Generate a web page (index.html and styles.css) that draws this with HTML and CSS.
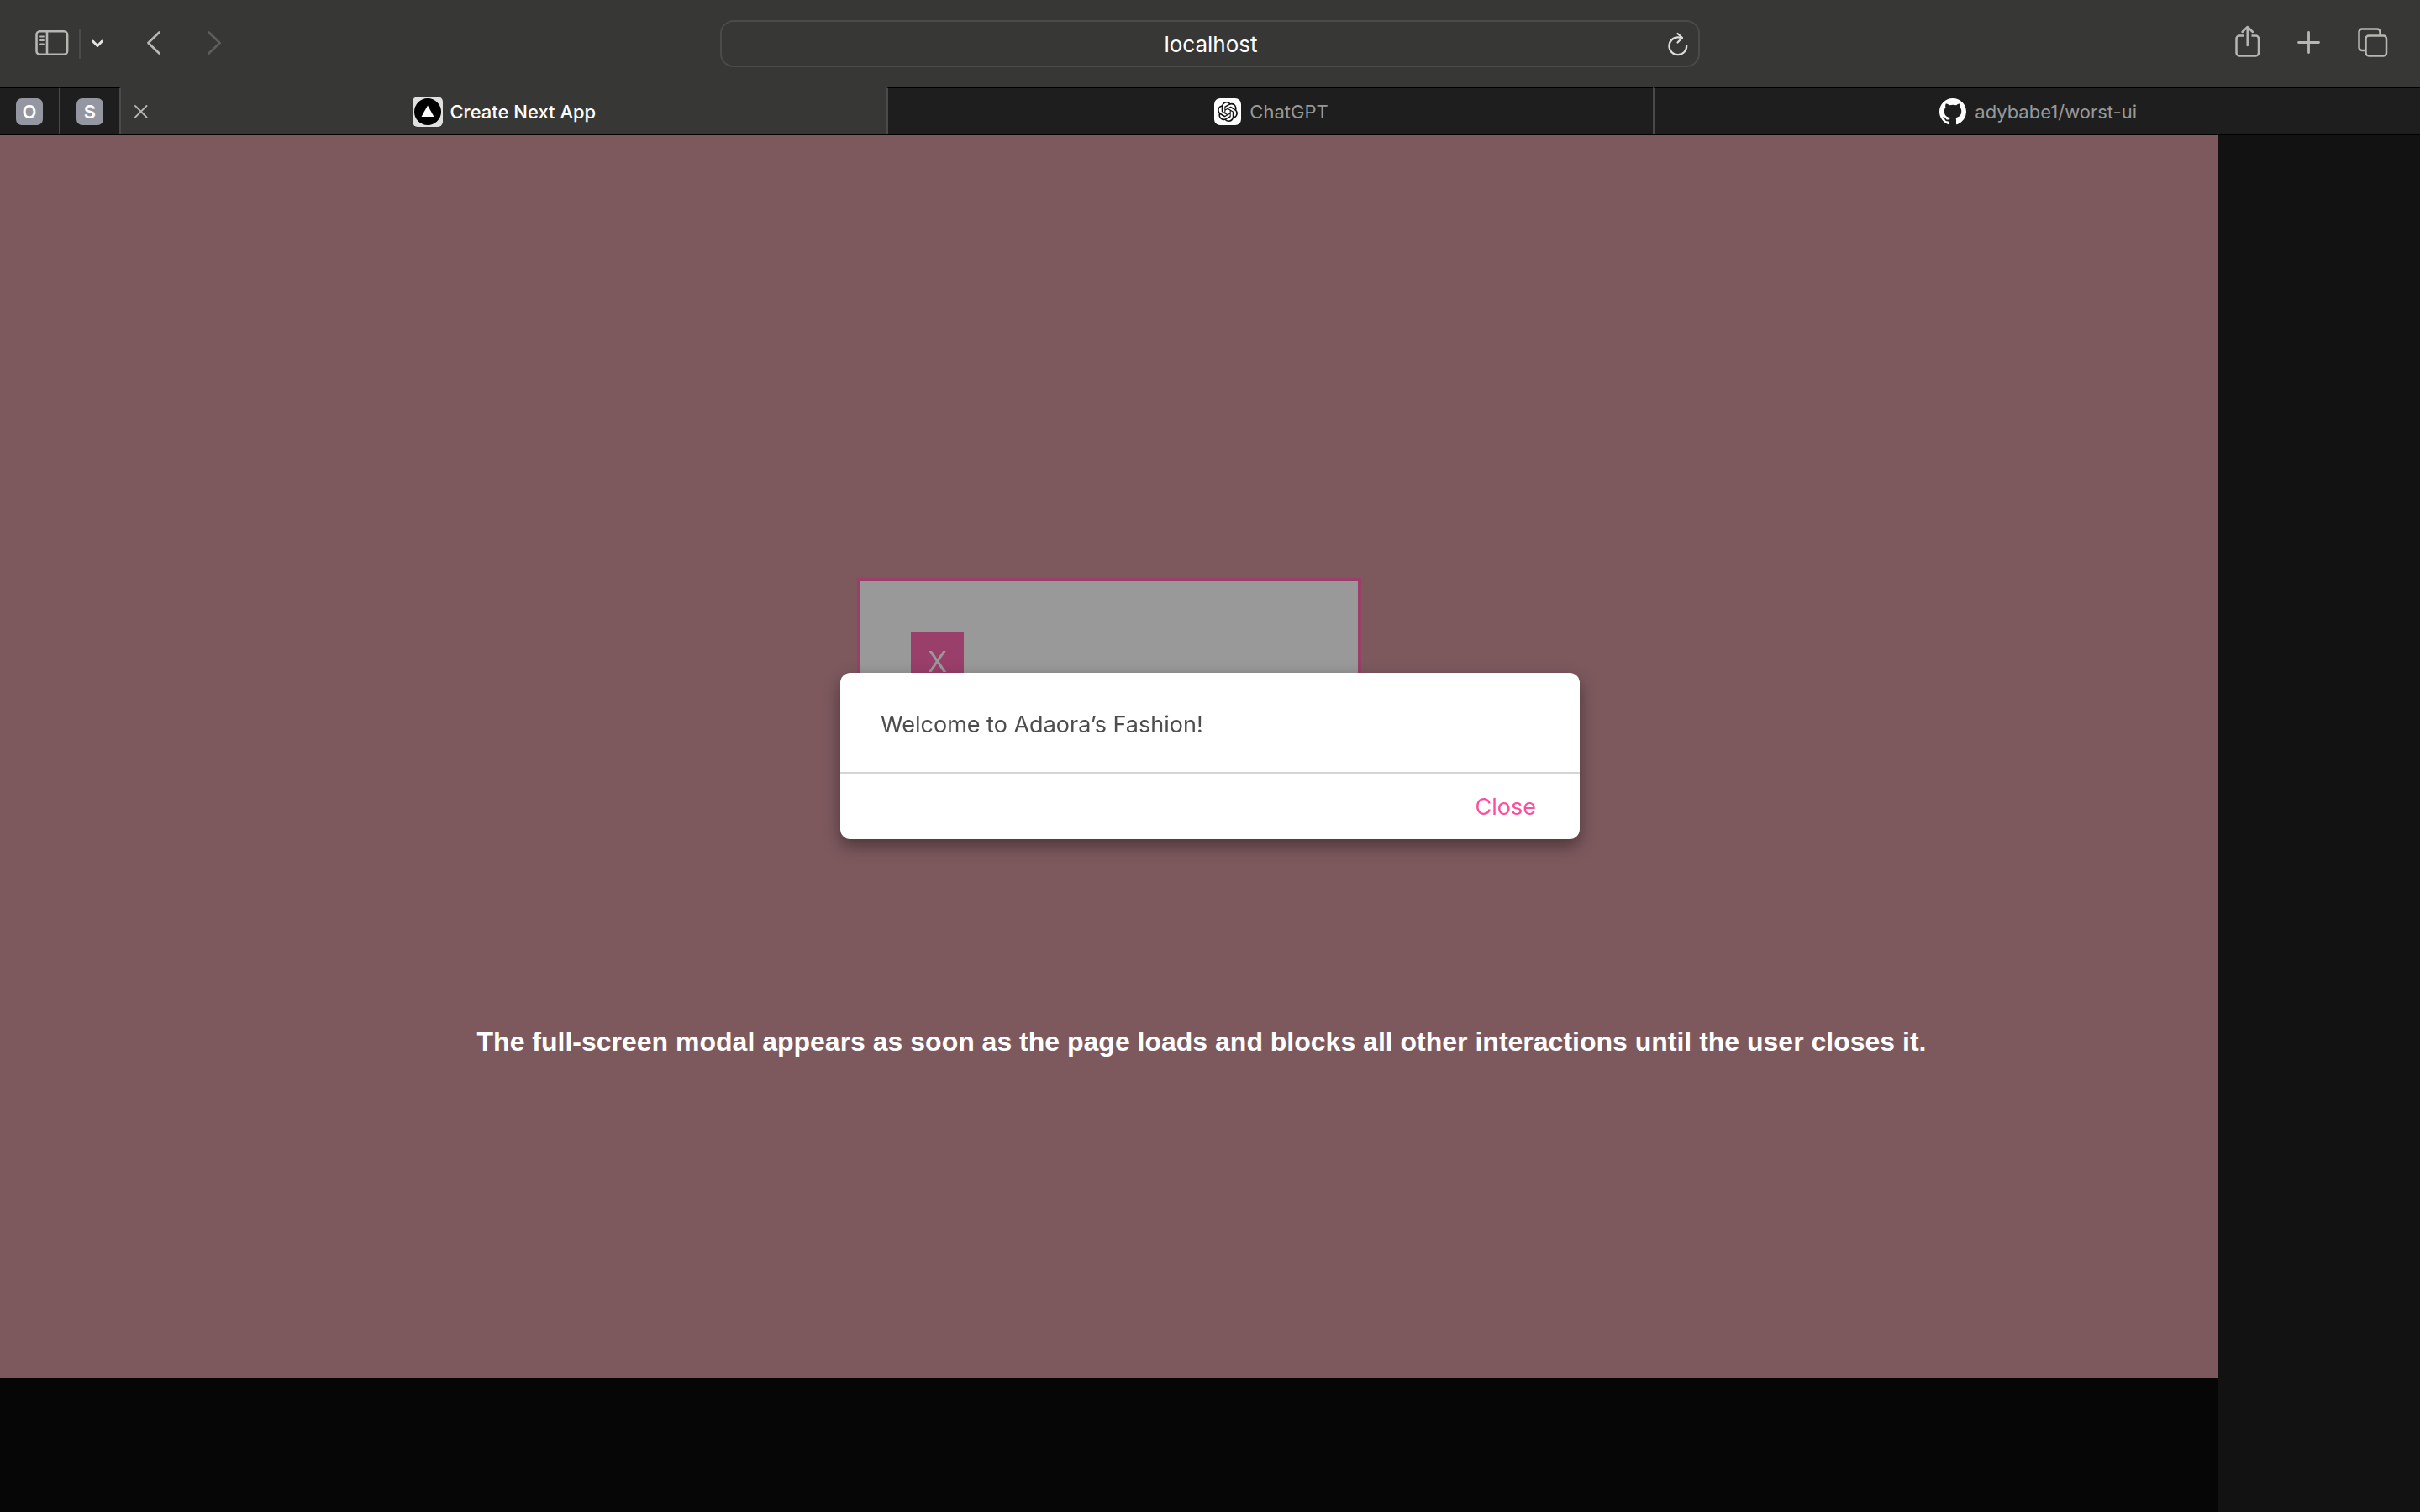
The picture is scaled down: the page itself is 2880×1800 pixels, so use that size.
FILE: index.html
```html
<!DOCTYPE html>
<html lang="en">
<head>
<meta charset="utf-8">
<title>Create Next App</title>
<link rel="stylesheet" href="styles.css">
</head>
<body>
<header class="toolbar">
  <div class="tools tools-left">
    <button class="tool" aria-label="Show sidebar">
      <svg width="40" height="44" viewBox="0 0 40 44" fill="none" stroke="#b6b6b3" stroke-width="2.6" stroke-linecap="round"><rect x="1.5" y="7.3" width="36.6" height="27.4" rx="4"/><path d="M14 7.5v27"/><path d="M6 13.5h4M6 18h4M6 22.500h4" stroke-width="1.8"/></svg>
    </button>
    <span class="divider"></span>
    <button class="tool tool-menu" aria-label="Sidebar menu">
      <svg width="16" height="44" viewBox="0 0 16 44" fill="none" stroke="#e4e4e2" stroke-width="3" stroke-linecap="round" stroke-linejoin="round"><path d="M2.500 19l5.500 5.500L13.500 19"/></svg>
    </button>
    <button class="tool tool-back" aria-label="Back">
      <svg width="18" height="44" viewBox="0 0 18 44" fill="none" stroke="#b6b6b3" stroke-width="2.800" stroke-linecap="round" stroke-linejoin="round"><path d="M15.500 8.500L2.500 21l13 12.500"/></svg>
    </button>
    <button class="tool tool-forward" aria-label="Forward">
      <svg width="18" height="44" viewBox="0 0 18 44" fill="none" stroke="#5d5d5b" stroke-width="2.800" stroke-linecap="round" stroke-linejoin="round"><path d="M2.500 8.500L15.500 21l-13 12.500"/></svg>
    </button>
  </div>
  <div class="address">
    <input class="address-input" type="text" value="localhost" aria-label="Address">
    <button class="tool reload" aria-label="Reload">
      <svg width="28" height="44" viewBox="0 0 28 44" fill="none" stroke="#dededc" stroke-width="2.200" stroke-linecap="round" stroke-linejoin="round"><path d="M24.200 24.300A10.400 10.400 0 1 1 14 14.400L18.500 14.900"/><path d="M13.500 10l5.500 5-5.500 5.500"/></svg>
    </button>
  </div>
  <div class="tools tools-right">
    <button class="tool" aria-label="Share">
      <svg width="30" height="44" viewBox="0 0 30 44" fill="none" stroke="#b6b6b3" stroke-width="2.500" stroke-linecap="round" stroke-linejoin="round"><path d="M10 12.500H5a3.500 3.500 0 0 0-3.500 3.500v17A3.500 3.500 0 0 0 5 36.500h19.500A3.500 3.500 0 0 0 28 33V16a3.500 3.500 0 0 0-3.500-3.500h-5" stroke-linecap="butt"/><path d="M14.700 24V2.500M8.500 8l6.200-6 6.200 6"/></svg>
    </button>
    <button class="tool" aria-label="New tab">
      <svg width="28" height="44" viewBox="0 0 28 44" fill="none" stroke="#b6b6b3" stroke-width="2.800" stroke-linecap="round"><path d="M1.500 20.500h24M13.500 8.500v24"/></svg>
    </button>
    <button class="tool" aria-label="Tab overview">
      <svg width="36" height="44" viewBox="0 0 36 44" fill="none" stroke="#b6b6b3" stroke-width="2.500"><path d="M26.500 12V8a3.500 3.500 0 0 0-3.500-3.500H5A3.500 3.500 0 0 0 1.500 8v18.500a3.500 3.500 0 0 0 3.500 3.500h4"/><rect x="9.500" y="12.500" width="24.500" height="24" rx="3.500"/></svg>
    </button>
  </div>
</header>
<nav class="tabs" aria-label="Tabs">
  <a class="pinned" href="#o"><span class="letter">O</span></a>
  <a class="pinned" href="#s"><span class="letter">S</span></a>
  <div class="tab tab-active">
    <button class="tab-close" aria-label="Close tab">
      <svg width="16" height="16" viewBox="0 0 16 16" fill="none" stroke="#b6b6b3" stroke-width="1.800" stroke-linecap="round"><path d="M1 1l13.500 13.500M14.500 1L1 14.500"/></svg>
    </button>
    <a class="tab-link" href="#app">
      <svg width="36" height="36" viewBox="0 0 36 36"><rect width="36" height="36" rx="6" fill="#e0e0e0"/><circle cx="18" cy="18" r="16" fill="#000"/><path d="M18 10.500L25.500 24h-15z" fill="#fff"/></svg>
      <span>Create Next App</span>
    </a>
  </div>
  <div class="tab">
    <a class="tab-link" href="#chat">
      <svg width="32" height="32" viewBox="0 0 32 32"><rect width="32" height="32" rx="7" fill="#fff"/><path transform="translate(4 4)" fill="#111" d="M22.2819 9.8211a5.9847 5.9847 0 0 0-.5157-4.9108 6.0462 6.0462 0 0 0-6.5098-2.9A6.0651 6.0651 0 0 0 4.9807 4.1818a5.9847 5.9847 0 0 0-3.9977 2.9 6.0462 6.0462 0 0 0 .7427 7.0966 5.98 5.98 0 0 0 .511 4.9107 6.051 6.051 0 0 0 6.5146 2.9001A5.9847 5.9847 0 0 0 13.2599 24a6.0557 6.0557 0 0 0 5.7718-4.2058 5.9894 5.9894 0 0 0 3.9977-2.9001 6.0557 6.0557 0 0 0-.7475-7.073zm-9.022 12.6081a4.4755 4.4755 0 0 1-2.8764-1.0408l.1419-.0804 4.7783-2.7582a.7948.7948 0 0 0 .3927-.6813v-6.7369l2.02 1.1686a.071.071 0 0 1 .038.052v5.5826a4.504 4.504 0 0 1-4.4945 4.4944zm-9.6607-4.1254a4.4708 4.4708 0 0 1-.5346-3.0137l.142.0852 4.783 2.7582a.7712.7712 0 0 0 .7806 0l5.8428-3.3685v2.3324a.0804.0804 0 0 1-.0332.0615L9.74 19.9502a4.4992 4.4992 0 0 1-6.1408-1.6464zM2.3408 7.8956a4.485 4.485 0 0 1 2.3655-1.9728V11.6a.7664.7664 0 0 0 .3879.6765l5.8144 3.3543-2.0201 1.1685a.0757.0757 0 0 1-.071 0l-4.8303-2.7865A4.504 4.504 0 0 1 2.3408 7.872zm16.5963 3.8558L13.1038 8.364 15.1192 7.2a.0757.0757 0 0 1 .071 0l4.8303 2.7913a4.4944 4.4944 0 0 1-.6765 8.1042v-5.6772a.79.79 0 0 0-.407-.667zm2.0107-3.0231l-.142-.0852-4.7735-2.7818a.7759.7759 0 0 0-.7854 0L9.409 9.2297V6.8974a.0662.0662 0 0 1 .0284-.0615l4.8303-2.7866a4.4992 4.4992 0 0 1 6.6802 4.66zM8.3065 12.863l-2.02-1.1638a.0804.0804 0 0 1-.038-.0567V6.0742a4.4992 4.4992 0 0 1 7.3757-3.4537l-.142.0805L8.704 5.459a.7948.7948 0 0 0-.3927.6813zm1.0976-2.3654l2.602-1.4998 2.6069 1.4998v2.9994l-2.5974 1.4997-2.6067-1.4997Z"/></svg>
      <span>ChatGPT</span>
    </a>
  </div>
  <div class="tab">
    <a class="tab-link" href="#repo">
      <svg width="32" height="32" viewBox="0 0 16 16" fill="#fff"><path d="M8 0C3.58 0 0 3.58 0 8c0 3.54 2.29 6.53 5.47 7.59.4.07.55-.17.55-.38 0-.19-.01-.82-.01-1.49-2.01.37-2.53-.49-2.69-.94-.09-.23-.48-.94-.82-1.13-.28-.15-.68-.52-.01-.53.63-.01 1.08.58 1.23.82.72 1.21 1.87.87 2.33.66.07-.52.28-.87.51-1.07-1.78-.2-3.64-.89-3.64-3.95 0-.87.31-1.59.82-2.15-.08-.2-.36-1.02.08-2.12 0 0 .67-.21 2.2.82.64-.18 1.32-.27 2-.27s1.36.09 2 .27c1.53-1.04 2.2-.82 2.2-.82.44 1.1.16 1.92.08 2.12.51.56.82 1.27.82 2.15 0 3.07-1.87 3.75-3.65 3.95.29.25.54.73.54 1.48 0 1.07-.01 1.93-.01 2.2 0 .21.15.46.55.38A8.01 8.01 0 0 0 16 8c0-4.42-3.58-8-8-8z"/></svg>
      <span>adybabe1/worst-ui</span>
    </a>
  </div>
</nav>
<main class="view">
  <section class="page">
    <div class="card">
      <button class="card-close">X</button>
    </div>
  </section>
  <p class="caption">The full-screen modal appears as soon as the page loads and blocks all other interactions until the user closes it.</p>
</main>
<dialog class="modal" open aria-labelledby="welcome">
  <p class="modal-text" id="welcome">Welcome to Adaora’s Fashion!</p>
  <div class="modal-footer">
    <button class="modal-close">Close</button>
  </div>
</dialog>
</body>
</html>
```
FILE: styles.css
```css
* { box-sizing: border-box; }

body {
  margin: 0;
  min-height: 100vh;
  display: flex;
  flex-direction: column;
  background: #060606;
  font-family: Inter, "Liberation Sans", sans-serif;
}

button { padding: 0; border: 0; background: none; font: inherit; color: inherit; }
a { color: inherit; text-decoration: none; }
svg { display: block; flex: none; }

.toolbar {
  display: grid;
  grid-template-columns: 1fr minmax(0, 1166px) 1fr;
  align-items: center;
  height: 104px;
  background: #373735;
}

.tools { display: flex; align-items: center; }
.tools-left { padding-left: 42px; }
.tools-right { justify-content: flex-end; gap: 44px; padding-right: 38px; }
.divider { width: 2px; height: 36px; margin-left: 12px; background: #4b4b49; }
.tool-menu { margin-left: 12px; }
.tool-back { margin-left: 50px; }
.tool-forward { margin-left: 54px; }

.address { position: relative; }
.address-input {
  display: block;
  width: 100%;
  height: 56px;
  padding: 0 46px 0 48px;
  border: 2px solid #4b4b49;
  border-radius: 16px;
  background: transparent;
  color: #fff;
  font: 26px/32px Inter, "Liberation Sans", sans-serif;
  text-align: center;
}
.reload { position: absolute; top: 6px; right: 12px; }

.tabs {
  display: flex;
  height: 57px;
  background: #1e1e1e;
  border-bottom: 1px solid #000;
  color: #98989a;
  font-size: 22px;
  line-height: 28px;
}
.pinned {
  display: flex;
  align-items: center;
  justify-content: center;
  width: 72px;
  border-top: 1px solid #000;
  border-right: 2px solid #4a4a4a;
}
.letter {
  width: 32px;
  height: 32px;
  border-radius: 7px;
  background: #9496a1;
  color: #fff;
  font-size: 22px;
  font-weight: 600;
  line-height: 32px;
  text-align: center;
}
.tab {
  position: relative;
  flex: 1;
  display: flex;
  align-items: center;
  justify-content: center;
  border-top: 1px solid #000;
}
.tab + .tab { border-left: 2px solid #4a4a4a; }
.tab-active { background: #373735; border-top-color: #373735; color: #fff; font-weight: 500; }
.tab-link { display: flex; align-items: center; gap: 10px; padding-left: 2px; }
.tab-active .tab-link { gap: 8px; }
.tab-close { position: absolute; left: 16px; }

.view {
  position: relative;
  flex: 1;
  display: flex;
  background: #121212;
}
.page {
  flex: 1;
  margin-right: 240px;
  padding-top: 527px;
  background: #7d595e;
  border-bottom: 160px solid #060606;
}
.card {
  width: 600px;
  height: 280px;
  margin: 0 auto;
  padding: 60px;
  border: 4px solid #993f6a;
  background: #999;
}
.card-close {
  width: 63px;
  height: 72px;
  background: #993f6a;
  color: #999;
  font-size: 34px;
  line-height: 72px;
}
.caption {
  position: absolute;
  top: 1059px;
  left: 0;
  right: 20px;
  margin: 0;
  color: #fff;
  font: bold 32px/40px "Liberation Sans", Arial, sans-serif;
  text-align: center;
}

.modal {
  position: fixed;
  inset: 0;
  width: 880px;
  height: fit-content;
  margin: auto;
  padding: 0;
  border: 0;
  border-radius: 12px;
  background: #fff;
  box-shadow: 0 8px 20px rgba(0, 0, 0, 0.4);
  font-size: 27px;
  line-height: 38px;
}
.modal-text { margin: 0; padding: 43px 48px 37px; color: #4d4d4d; }
.modal-footer {
  display: flex;
  justify-content: flex-end;
  padding: 21px 52px 19px;
  border-top: 2px solid #d4d4d4;
}
.modal-close { color: #ff4d9e; }
```
